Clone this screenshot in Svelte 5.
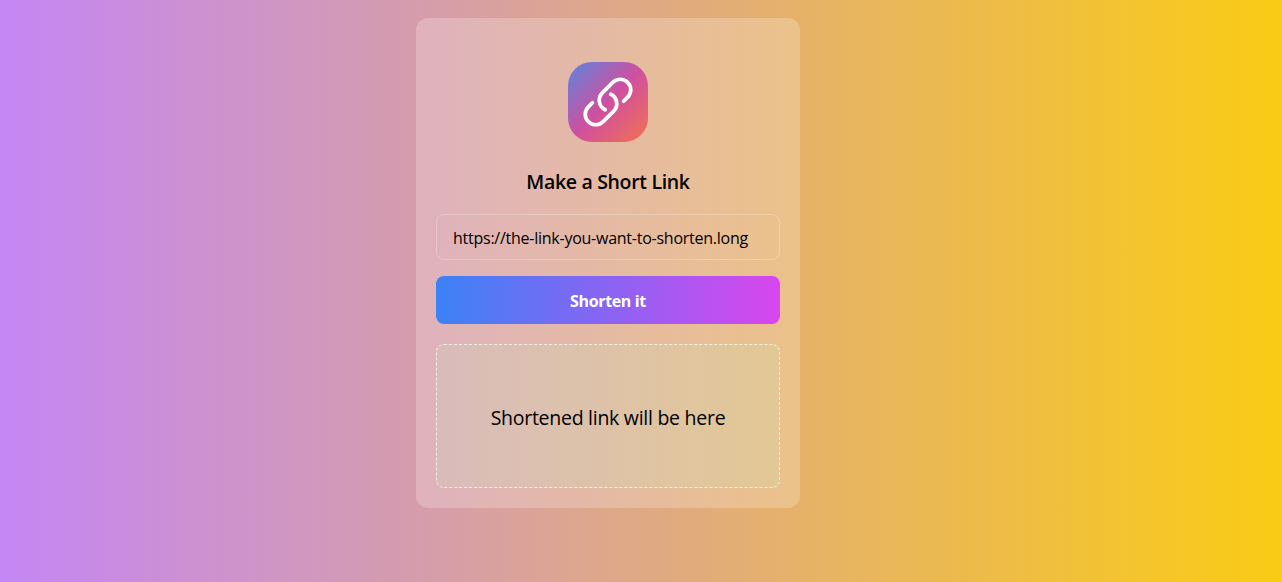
<script>
  let url = $state('https://the-link-you-want-to-shorten.long');
</script>

<main>
  <section class="card">
    <div class="logo">
      <svg viewBox="0 0 24 24" fill="none" stroke="currentColor" stroke-width="1.6" stroke-linecap="round" stroke-linejoin="round" aria-hidden="true">
        <path d="M13.19 8.688a4.5 4.5 0 011.242 7.244l-4.5 4.5a4.5 4.5 0 01-6.364-6.364l1.757-1.757m13.35-.622l1.757-1.757a4.5 4.5 0 00-6.364-6.364l-4.5 4.5a4.5 4.5 0 001.242 7.244" />
      </svg>
    </div>
    <h1>Make a Short Link</h1>
    <input type="text" bind:value={url} />
    <button type="button">Shorten it</button>
    <div class="result"><span>Shortened link will be here</span></div>
  </section>
</main>

<style>
  :global(body) {
    margin: 0;
  }
  main {
    box-sizing: border-box;
    min-height: 100vh;
    padding: 18px 66px 0 0;
    display: flex;
    justify-content: center;
    align-items: flex-start;
    background: linear-gradient(to right, #c486f4, #facc15);
    font-family: 'Segoe UI', 'Open Sans', 'Noto Sans', sans-serif;
    color: #000;
  }
  .card {
    box-sizing: border-box;
    width: 384px;
    height: 490px;
    padding: 44px 20px 20px;
    display: flex;
    flex-direction: column;
    align-items: stretch;
    border-radius: 12px;
    background: rgba(255, 255, 255, 0.22);
  }
  .logo {
    width: 80px;
    height: 80px;
    align-self: center;
    display: grid;
    place-items: center;
    border-radius: 24px;
    background: linear-gradient(to bottom right, #5b86e0, #d04f9f 50%, #f3734f);
    color: #fff;
  }
  .logo svg {
    width: 56px;
    height: 56px;
  }
  h1 {
    margin: 26px 0 18px;
    font-size: 19.5px;
    line-height: 28px;
    font-weight: 600;
    letter-spacing: -0.33px;
    text-align: center;
    white-space: nowrap;
  }
  input {
    box-sizing: border-box;
    width: 100%;
    height: 46px;
    padding: 2px 16px 0;
    border: 1px solid rgba(255, 255, 255, 0.25);
    border-radius: 8px;
    background: transparent;
    outline: none;
    font: 400 16px/24px 'Segoe UI', 'Open Sans', 'Noto Sans', sans-serif;
    letter-spacing: -0.25px;
    color: #000;
  }
  button {
    height: 48px;
    margin: 16px 0 20px;
    padding: 2px 0 0;
    border: 0;
    border-radius: 8px;
    background: linear-gradient(to right, #3b82f6, #d946ef);
    font: 700 16px/24px 'Segoe UI', 'Open Sans', 'Noto Sans', sans-serif;
    letter-spacing: -0.35px;
    color: #fff;
  }
  .result {
    box-sizing: border-box;
    height: 144px;
    padding-top: 4px;
    display: flex;
    align-items: center;
    justify-content: center;
    border: 1px dashed rgba(255, 255, 255, 0.7);
    border-radius: 8px;
    background: rgba(187, 240, 190, 0.17);
    font-size: 19.5px;
    line-height: 28px;
    letter-spacing: -0.27px;
    white-space: nowrap;
  }
</style>
